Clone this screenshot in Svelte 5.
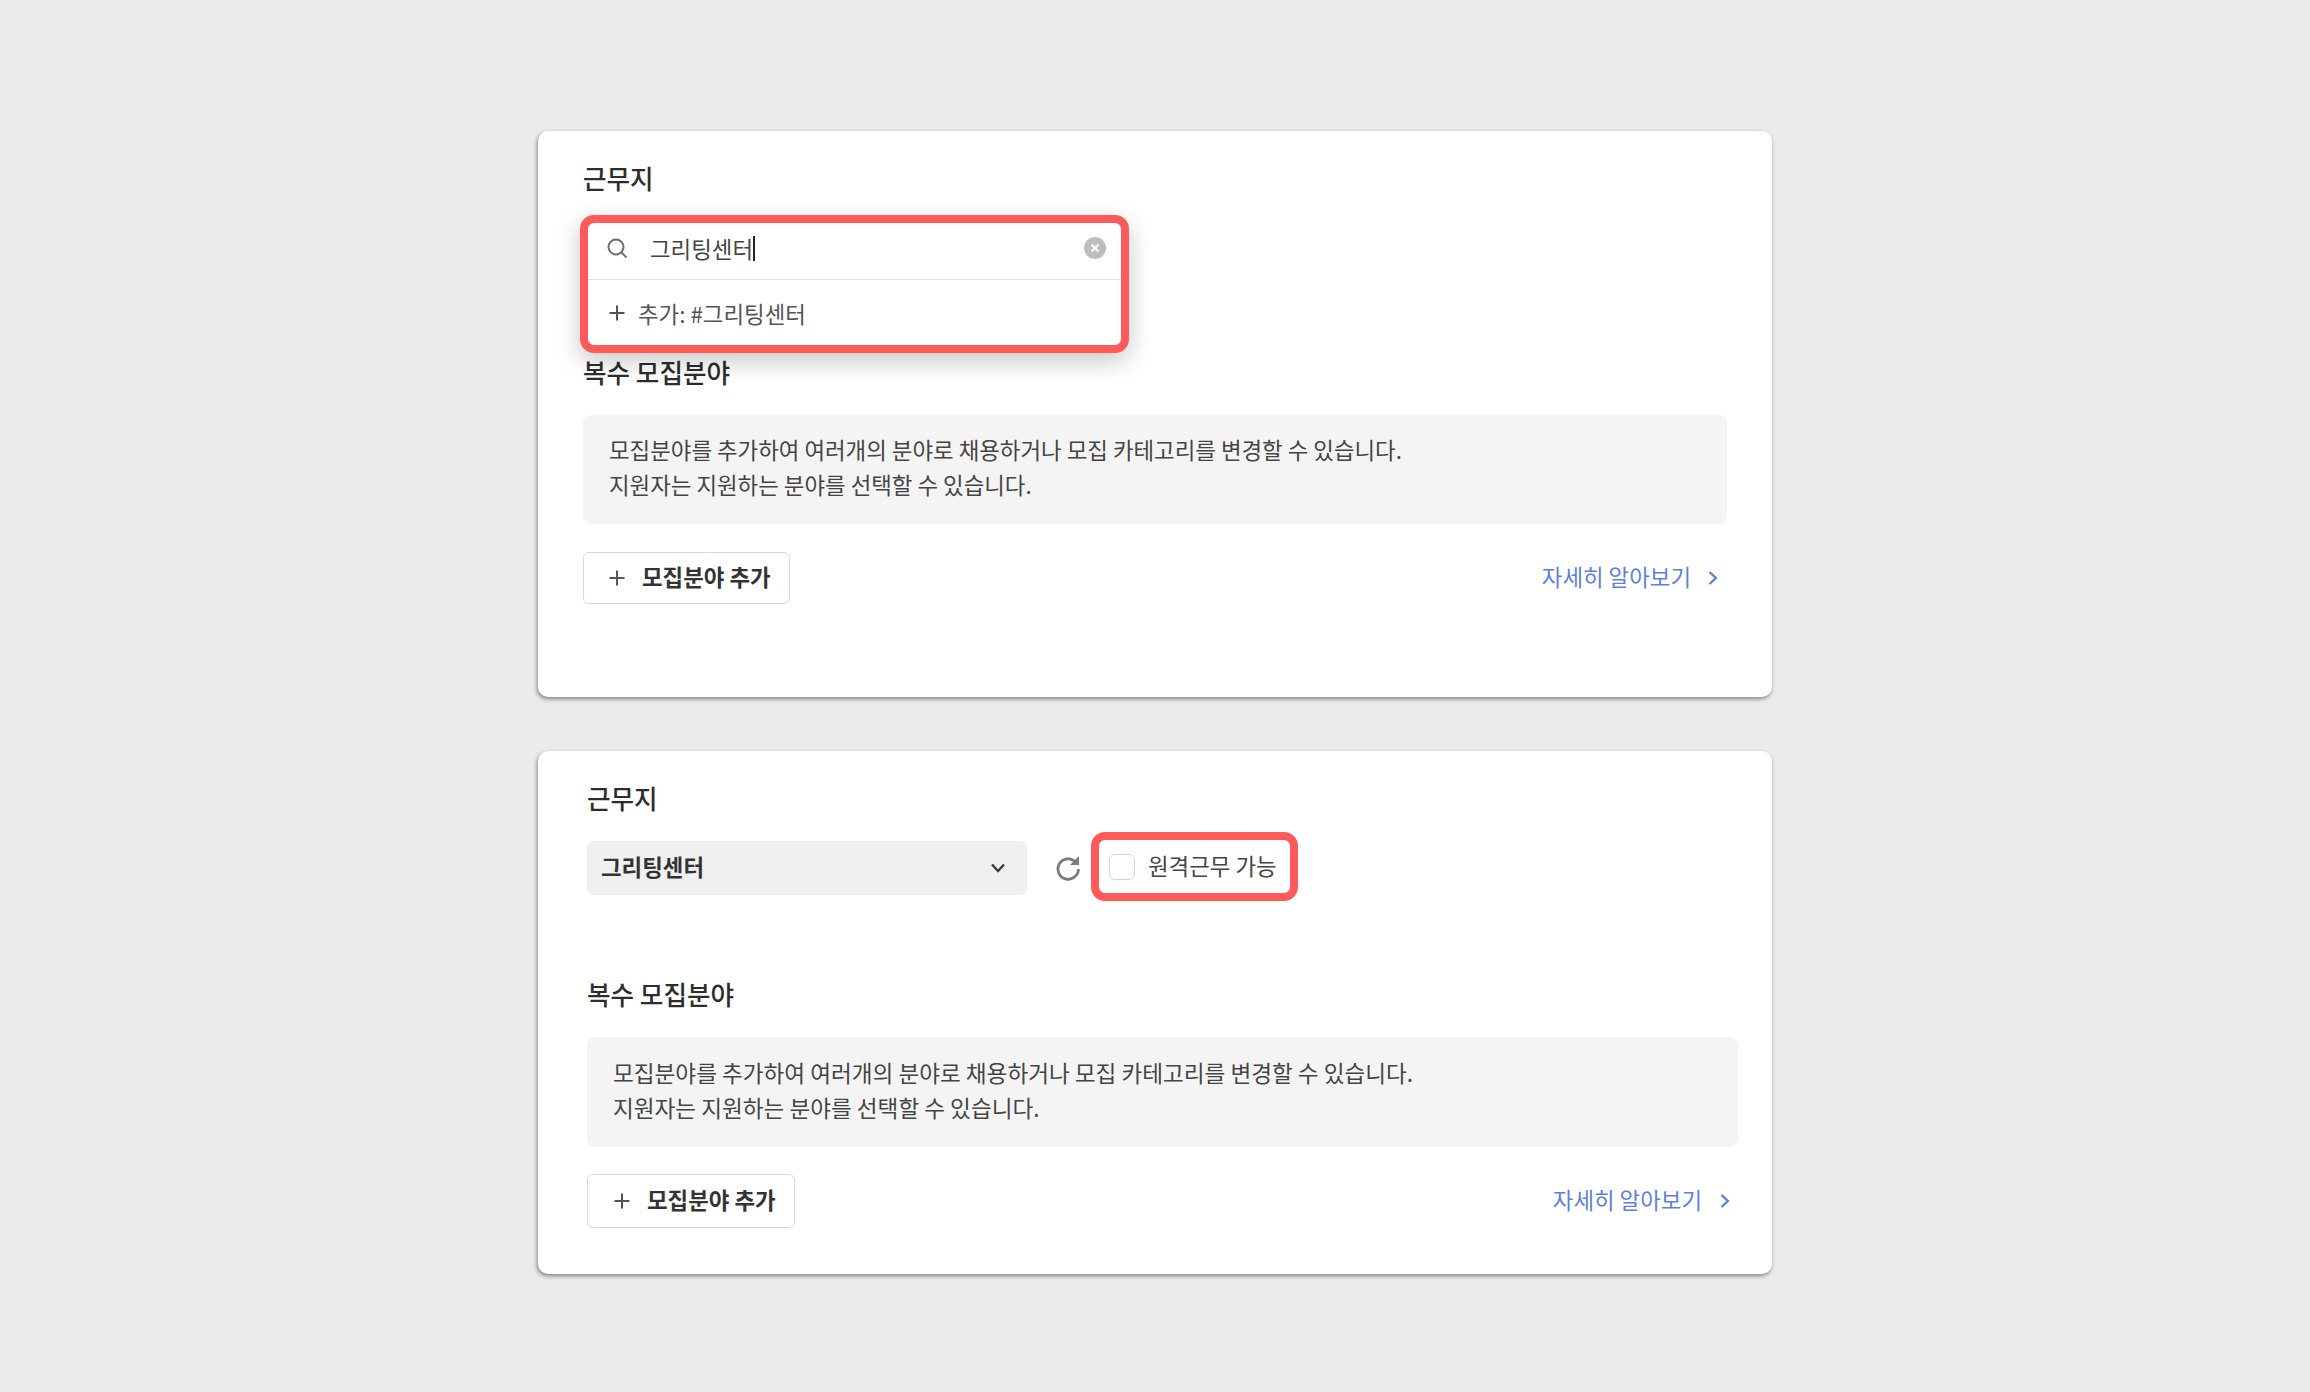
<script lang="ts">
  const infoLines = [
    "모집분야를 추가하여 여러개의 분야로 채용하거나 모집 카테고리를 변경할 수 있습니다.",
    "지원자는 지원하는 분야를 선택할 수 있습니다.",
  ];
</script>

{#snippet plus()}
  <svg class="plus" width="18" height="18" viewBox="0 0 18 18" aria-hidden="true">
    <path d="M9 1.5v15M1.5 9h15" fill="none" stroke="currentColor" stroke-width="2" />
  </svg>
{/snippet}

{#snippet recruit()}
  <h2 class="title">복수 모집분야</h2>
  <div class="info">
    {#each infoLines as line}
      <p>{line}</p>
    {/each}
  </div>
  <div class="actions">
    <button type="button" class="add">
      {@render plus()}
      <span>모집분야 추가</span>
    </button>
    <a class="more" href="#more">
      <span>자세히 알아보기</span>
      <svg width="12" height="16" viewBox="0 0 12 16" aria-hidden="true">
        <path d="M2.5 2 8.8 8 2.5 14" fill="none" stroke="currentColor" stroke-width="2.4" />
      </svg>
    </a>
  </div>
{/snippet}

<main class="page">
  <section class="card first">
    <h2 class="title">근무지</h2>
    <div class="slot">
      <div class="popup">
        <div class="search">
          <svg width="22" height="22" viewBox="0 0 22 22" aria-hidden="true">
            <circle cx="10" cy="10" r="7.5" fill="none" stroke="#6f6f6f" stroke-width="2" />
            <path d="m15.5 15.5 5 5" fill="none" stroke="#6f6f6f" stroke-width="2" />
          </svg>
          <span class="query">그리팅센터</span>
          <span class="caret"></span>
          <svg class="clear" width="22" height="22" viewBox="0 0 22 22" aria-hidden="true">
            <circle cx="11" cy="11" r="11" fill="#bdbdbd" />
            <path d="m7.5 7.5 7 7m0-7-7 7" fill="none" stroke="#fff" stroke-width="2.2" />
          </svg>
        </div>
        <div class="option">
          {@render plus()}
          <span>추가: #그리팅센터</span>
        </div>
      </div>
    </div>
    {@render recruit()}
  </section>

  <section class="card second">
    <h2 class="title">근무지</h2>
    <div class="location">
      <div class="select">
        <span>그리팅센터</span>
        <svg width="16" height="12" viewBox="0 0 16 12" aria-hidden="true">
          <path d="m2 2.5 6 6.5 6-6.5" fill="none" stroke="#3a3a3a" stroke-width="2.4" />
        </svg>
      </div>
      <svg class="refresh" width="26" height="28" viewBox="0 0 26 28" aria-hidden="true">
        <path d="M20.8 8.2A10.2 10.2 0 1 0 23.4 15" fill="none" stroke="#7b7b7b" stroke-width="2.8" />
        <path d="M24 2v9h-9z" fill="#7b7b7b" />
      </svg>
      <label class="remote">
        <span class="check"></span>
        <span>원격근무 가능</span>
      </label>
    </div>
    {@render recruit()}
  </section>
</main>

<style>
  :global(body) {
    margin: 0;
    background: #ebebeb;
  }

  .page {
    display: flex;
    flex-direction: column;
    align-items: center;
    gap: 54px;
    height: 1392px;
    box-sizing: border-box;
    padding-top: 131px;
    font-family: "Noto Sans CJK KR", "Noto Sans", sans-serif;
    font-size: 22.4px;
    color: #333;
    overflow: hidden;
  }

  .card {
    width: 1234px;
    box-sizing: border-box;
    background: #fff;
    border-radius: 10px;
    box-shadow: -1px 2px 4px rgba(0, 0, 0, 0.45);
  }

  .first {
    height: 566px;
    padding: 29px 45px 0;
  }

  .second {
    height: 523px;
    padding: 29px 34px 0 49px;
  }

  .title {
    margin: 0;
    font-size: 25.6px;
    line-height: 36px;
    font-weight: 500;
    color: #2d2d2d;
  }

  .slot {
    position: relative;
    height: 158px;
  }

  .popup {
    position: absolute;
    left: -3px;
    top: 19px;
    width: 549px;
    height: 138px;
    box-sizing: border-box;
    border: 8px solid #ff5a5a;
    border-radius: 14px;
    background: #fff;
    box-shadow: 0 8px 24px rgba(0, 0, 0, 0.22);
  }

  .search {
    display: flex;
    align-items: center;
    box-sizing: border-box;
    height: 57px;
    padding: 0 15px 6px 18px;
    border-bottom: 1px solid #e2e2e2;
  }

  .query {
    margin-left: 22px;
    color: #444;
  }

  .caret {
    width: 1.5px;
    height: 25px;
    background: #222;
  }

  .clear {
    margin-left: auto;
  }

  .option {
    display: flex;
    align-items: center;
    gap: 12px;
    height: 65px;
    padding-left: 20px;
    box-sizing: border-box;
    color: #555;
  }

  .plus {
    flex: none;
    color: #555;
  }

  .info {
    box-sizing: border-box;
    margin-top: 25px;
    padding: 17px 26px;
    height: 109px;
    background: #f4f4f4;
    border-radius: 8px;
    line-height: 35px;
    color: #444;
  }

  .info p {
    margin: 0;
  }

  .actions {
    display: flex;
    align-items: center;
    justify-content: space-between;
    margin-top: 28px;
  }

  .add {
    display: flex;
    align-items: center;
    gap: 16px;
    box-sizing: border-box;
    width: 207px;
    height: 52px;
    padding: 0 0 5px 24px;
    background: #fff;
    border: 1.5px solid #d9d9d9;
    border-radius: 6px;
    font: inherit;
    font-weight: 700;
    color: #333;
  }

  .add .plus {
    margin-top: 5px;
  }

  .more {
    display: flex;
    align-items: center;
    gap: 16px;
    padding-right: 8px;
    color: #5f7fdc;
    text-decoration: none;
  }

  .more span {
    margin-bottom: 5px;
  }

  .location {
    display: flex;
    align-items: center;
    height: 69px;
    margin-top: 16px;
    margin-bottom: 75px;
  }

  .select {
    display: flex;
    align-items: center;
    justify-content: space-between;
    box-sizing: border-box;
    width: 440px;
    height: 54px;
    margin-top: 3px;
    padding: 0 21px 5px 14px;
    background: #f0f0f0;
    border-radius: 6px;
    font-weight: 700;
    color: #333;
  }

  .select svg {
    margin-top: 5px;
  }

  .refresh {
    margin-top: 3px;
    margin-left: 28px;
    flex: none;
  }

  .remote {
    display: flex;
    align-items: center;
    gap: 13px;
    box-sizing: border-box;
    width: 207px;
    height: 69px;
    margin-left: 10px;
    padding: 0 0 3px 10px;
    border: 8px solid #ff5a5a;
    border-radius: 14px;
    color: #444;
  }

  .check {
    width: 26px;
    height: 26px;
    margin-top: 3px;
    box-sizing: border-box;
    border: 1.5px solid #d4d4d4;
    border-radius: 6px;
    flex: none;
  }

  .second .info {
    margin-top: 25px;
    padding-top: 18px;
    height: 110px;
    font-size: 22.6px;
  }

  .second .actions {
    margin-top: 27px;
  }

  .second .add {
    width: 208px;
    height: 54px;
    padding-left: 25px;
  }

  .second .more {
    gap: 17px;
    padding-right: 7px;
  }
</style>
